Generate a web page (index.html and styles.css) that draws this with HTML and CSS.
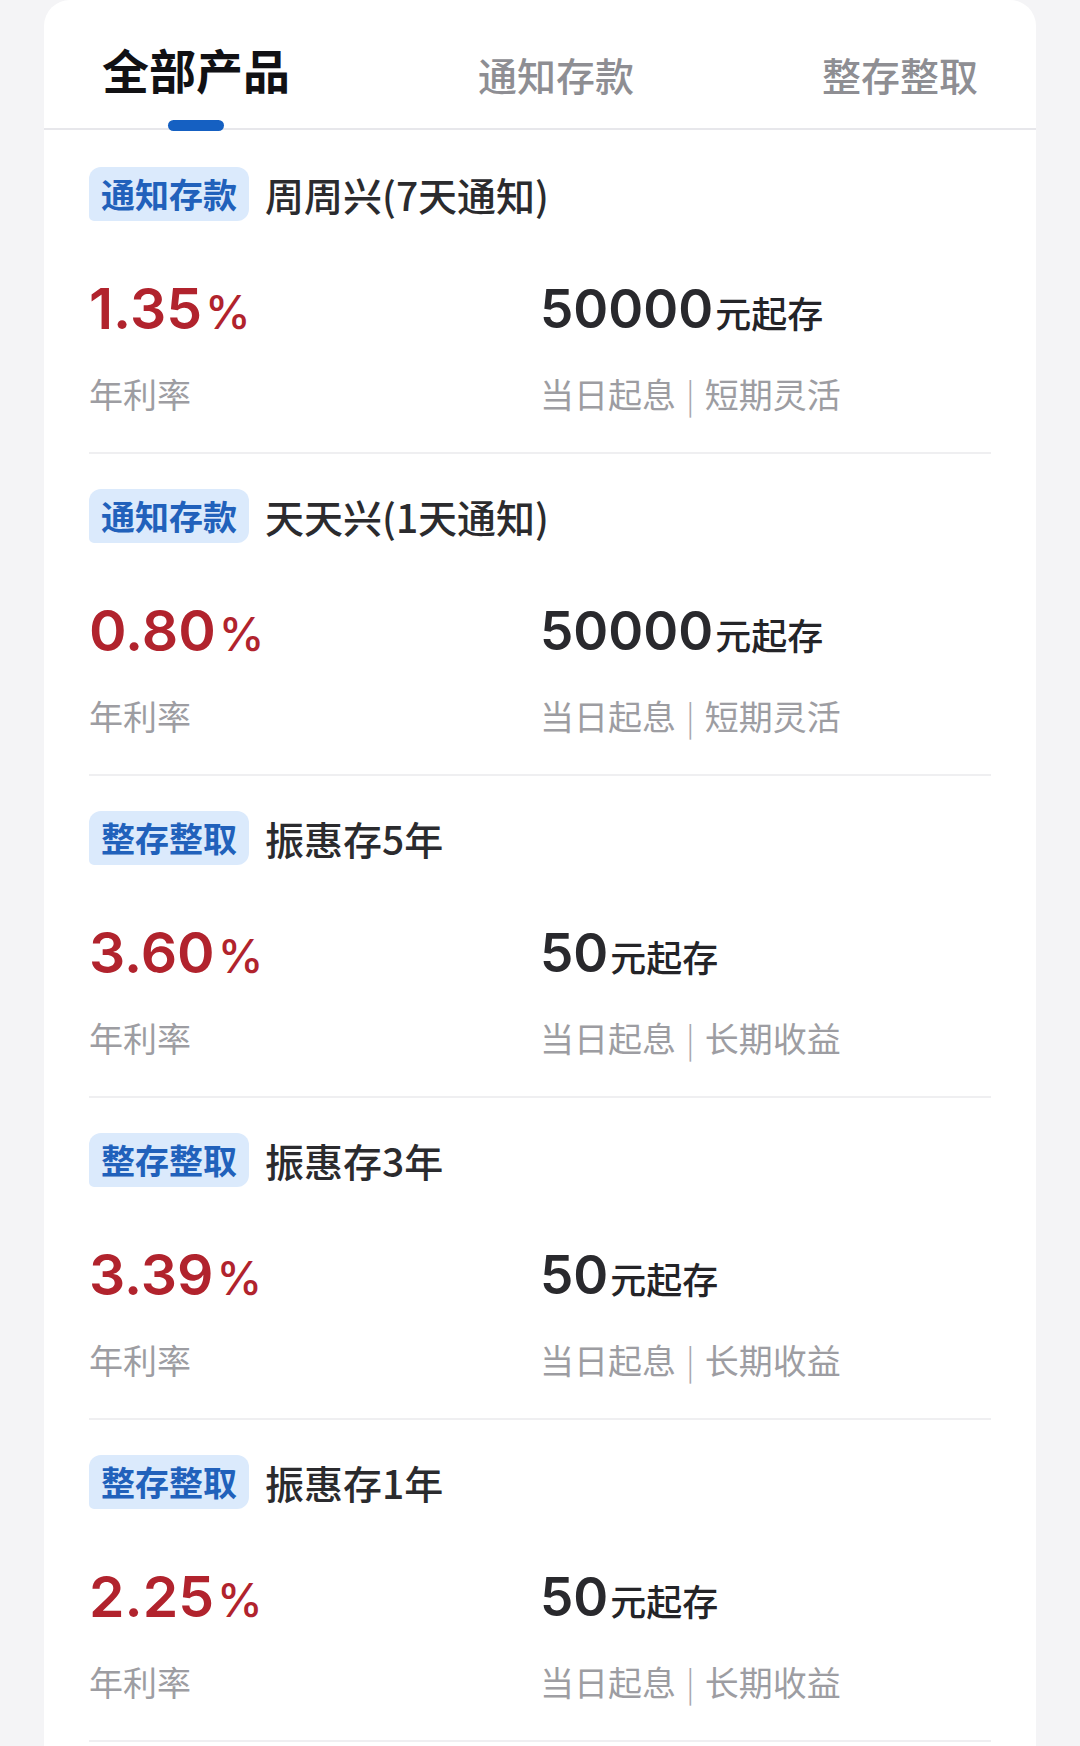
FILE: index.html
```html
<!DOCTYPE html>
<html lang="zh-CN">
<head>
<meta charset="utf-8">
<title>存款产品</title>
<link rel="stylesheet" href="styles.css">
</head>
<body>
<div class="card">
  <div class="tabs">
    <div class="tab active">全部产品<span class="bar"></span></div>
    <div class="tab">通知存款</div>
    <div class="tab">整存整取</div>
  </div>
  <div class="list">
    <div class="row">
      <div class="head"><span class="tag">通知存款</span><span class="title">周周兴(7天通知)</span></div>
      <div class="grid">
        <div class="col">
          <div class="value rate">1.35<span class="pct">%</span></div>
          <div class="label">年利率</div>
        </div>
        <div class="col">
          <div class="value amount">50000<span class="unit">元起存</span></div>
          <div class="label">当日起息<span class="sep">|</span>短期灵活</div>
        </div>
      </div>
    </div>
    <div class="row">
      <div class="head"><span class="tag">通知存款</span><span class="title">天天兴(1天通知)</span></div>
      <div class="grid">
        <div class="col">
          <div class="value rate">0.80<span class="pct">%</span></div>
          <div class="label">年利率</div>
        </div>
        <div class="col">
          <div class="value amount">50000<span class="unit">元起存</span></div>
          <div class="label">当日起息<span class="sep">|</span>短期灵活</div>
        </div>
      </div>
    </div>
    <div class="row">
      <div class="head"><span class="tag">整存整取</span><span class="title">振惠存5年</span></div>
      <div class="grid">
        <div class="col">
          <div class="value rate">3.60<span class="pct">%</span></div>
          <div class="label">年利率</div>
        </div>
        <div class="col">
          <div class="value amount">50<span class="unit">元起存</span></div>
          <div class="label">当日起息<span class="sep">|</span>长期收益</div>
        </div>
      </div>
    </div>
    <div class="row">
      <div class="head"><span class="tag">整存整取</span><span class="title">振惠存3年</span></div>
      <div class="grid">
        <div class="col">
          <div class="value rate">3.39<span class="pct">%</span></div>
          <div class="label">年利率</div>
        </div>
        <div class="col">
          <div class="value amount">50<span class="unit">元起存</span></div>
          <div class="label">当日起息<span class="sep">|</span>长期收益</div>
        </div>
      </div>
    </div>
    <div class="row">
      <div class="head"><span class="tag">整存整取</span><span class="title">振惠存1年</span></div>
      <div class="grid">
        <div class="col">
          <div class="value rate">2.25<span class="pct">%</span></div>
          <div class="label">年利率</div>
        </div>
        <div class="col">
          <div class="value amount">50<span class="unit">元起存</span></div>
          <div class="label">当日起息<span class="sep">|</span>长期收益</div>
        </div>
      </div>
    </div>
  </div>
</div>
</body>
</html>
```

FILE: styles.css
```css
* { box-sizing: border-box; }
html, body {
  margin: 0;
  padding: 0;
  background: #f4f4f6;
}
body {
  font-family: "Noto Sans CJK SC", "Noto Sans", sans-serif;
  color: #2a2a2e;
}
.card {
  margin: 0 44px;
  min-height: 1746px;
  background: #ffffff;
  border-radius: 26px 26px 0 0;
}
.tabs {
  display: flex;
  justify-content: space-between;
  height: 130px;
  padding: 0 58px;
  border-bottom: 2px solid #e7e7eb;
}
.tab {
  position: relative;
  padding-top: 50px;
  font-size: 39px;
  line-height: 48px;
  font-weight: 500;
  color: #8e8e93;
  white-space: nowrap;
}
.tab.active {
  padding-top: 41px;
  font-size: 47px;
  line-height: 56px;
  font-weight: 700;
  color: #111114;
}
.bar {
  position: absolute;
  left: 50%;
  bottom: -3px;
  width: 56px;
  height: 11px;
  margin-left: -28px;
  border-radius: 6px;
  background: #1560c2;
}
.list {
  padding: 2px 45px 0;
}
.row {
  padding: 35px 0 38px;
  border-bottom: 2px solid #efeff1;
}
.head {
  display: flex;
  align-items: center;
  height: 54px;
}
.tag {
  height: 54px;
  line-height: 54px;
  padding: 0 12px;
  font-size: 34px;
  font-weight: 700;
  color: #2161bb;
  background: #dbeafc;
  border-radius: 12px 12px 12px 5px;
  white-space: nowrap;
}
.title {
  margin-left: 16px;
  font-size: 39px;
  font-weight: 500;
  color: #2b2b2e;
  white-space: nowrap;
}
.grid {
  display: grid;
  grid-template-columns: 1fr 1fr;
  margin-top: 53px;
}
.value {
  height: 70px;
  font-family: "Inter", "Liberation Sans", sans-serif;
  font-weight: 600;
  line-height: 70px;
  white-space: nowrap;
}
.rate {
  font-size: 57px;
  color: #b1232d;
}
.pct {
  margin-left: 3px;
  font-size: 46px;
  font-weight: 500;
  line-height: 1;
}
.amount {
  font-size: 53px;
  color: #29292d;
}
.unit {
  margin-left: 2px;
  font-family: "Noto Sans CJK SC", sans-serif;
  font-size: 36px;
  font-weight: 500;
  line-height: 1;
  color: #242428;
}
.label {
  height: 40px;
  margin-top: 30px;
  font-size: 34px;
  line-height: 40px;
  color: #9d9da2;
  white-space: nowrap;
}
.sep {
  margin: 0 10px;
  font-weight: 300;
  color: #a8a8ad;
}
```
